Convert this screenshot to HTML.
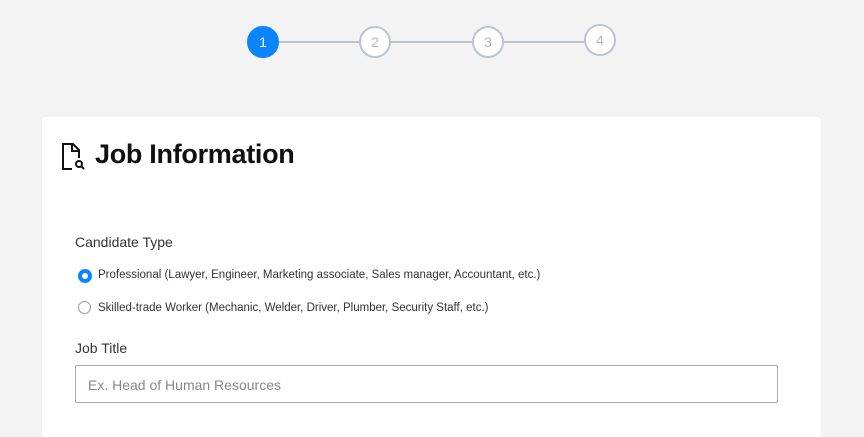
<!DOCTYPE html>
<html><head><style>
body{margin:0;width:864px;height:419px;background:#f3f3f3;font-family:"Liberation Sans",sans-serif;position:relative;overflow:hidden}
.c{position:absolute;width:28px;height:28px;border:2px solid #bcc4cf;border-radius:50%;background:#fff;color:#b0b8c4;font-size:14px;text-align:center;line-height:28px}
.l{position:absolute;height:2px;background:#bcc4cf;top:41px}
.card{position:absolute;left:42px;top:117px;width:779px;height:320px;background:#fff;border-radius:4px}
.t{position:absolute;color:#333}
.r{position:absolute;width:11px;height:11px;border-radius:50%;border:1px solid #999;background:#fff}
</style></head><body>
<div class="l" style="left:278px;width:84px"></div>
<div class="l" style="left:390px;width:84px"></div>
<div class="l" style="left:503px;width:84px"></div>
<div class="c" style="left:247px;top:26px;background:#0a84ff;border-color:#0a84ff;color:#fff">1</div>
<div class="c" style="left:359px;top:26px">2</div>
<div class="c" style="left:472px;top:26px">3</div>
<div class="c" style="left:584px;top:24px">4</div>
<div class="card"></div>
<svg style="position:absolute;left:60px;top:142px" width="26" height="30" viewBox="0 0 26 30" fill="none" stroke="#111" stroke-width="2"><path d="M12 27H3V2h10l6 6v8"/><path d="M12 2v7h7"/><circle cx="19" cy="22" r="3"/><path d="M21 24l3 3"/></svg>
<div class="t" style="left:95px;top:139px;font-size:27px;font-weight:bold;color:#111;letter-spacing:-0.3px">Job Information</div>
<div class="t" style="left:75px;top:234px;font-size:14px">Candidate Type</div>
<div class="r" style="left:78px;top:269px;border:4px solid #0a84ff;width:6px;height:6px"></div>
<div class="t" style="left:98px;top:269px;font-size:11.5px">Professional (Lawyer, Engineer, Marketing associate, Sales manager, Accountant, etc.)</div>
<div class="r" style="left:78px;top:301px"></div>
<div class="t" style="left:98px;top:302px;font-size:11.5px">Skilled-trade Worker (Mechanic, Welder, Driver, Plumber, Security Staff, etc.)</div>
<div class="t" style="left:75px;top:340px;font-size:14px">Job Title</div>
<div style="position:absolute;left:75px;top:365px;width:701px;height:36px;border:1px solid #aaa;border-radius:2px;background:#fff"></div>
<div class="t" style="left:88px;top:377px;font-size:14px;color:#888">Ex. Head of Human Resources</div>
</body></html>
